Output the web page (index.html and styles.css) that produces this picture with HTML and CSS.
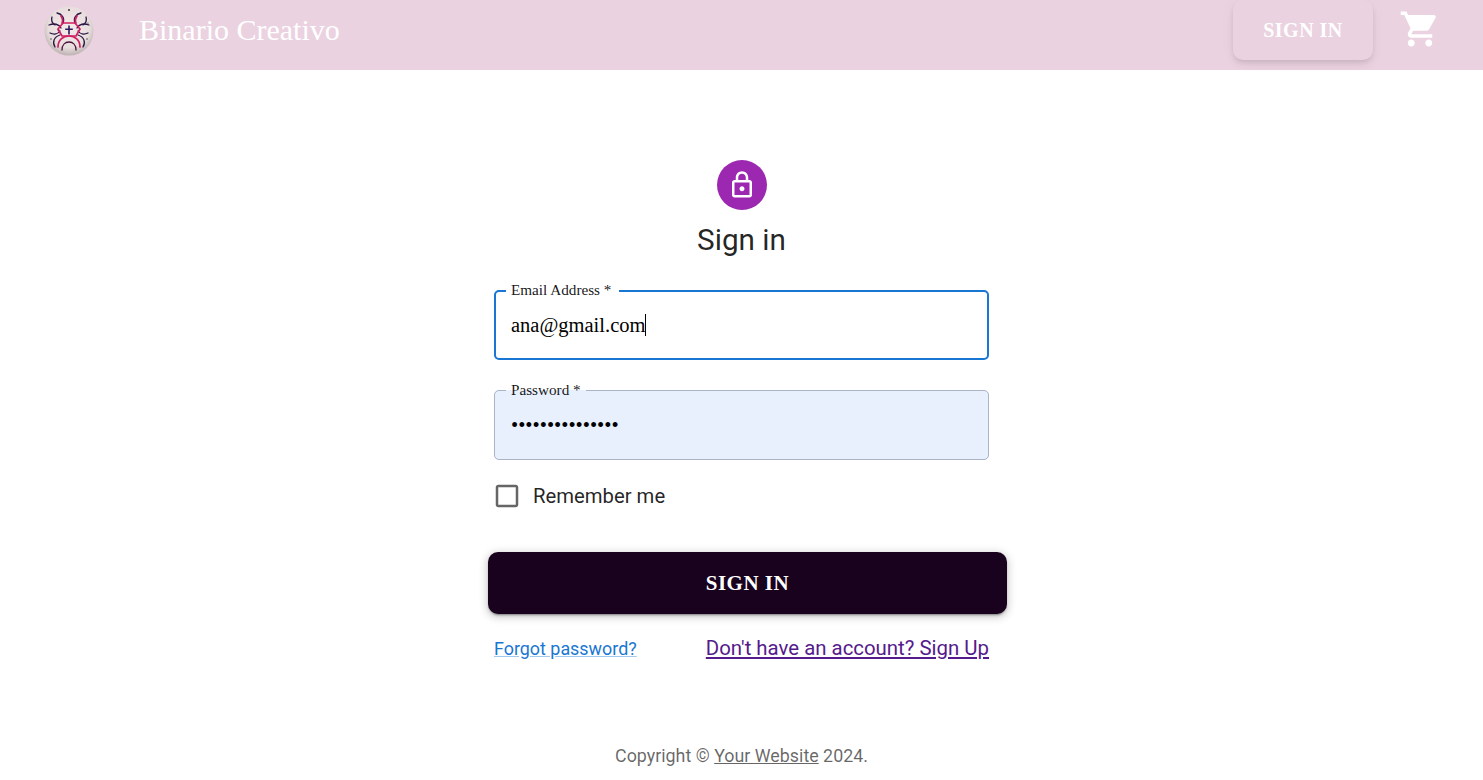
FILE: index.html
```html
<!DOCTYPE html>
<html lang="en">
<head>
<meta charset="utf-8">
<title>Binario Creativo</title>
<link rel="stylesheet" href="styles.css">
</head>
<body>
<header class="topbar">
  <svg class="logo" viewBox="0 0 50 50" aria-hidden="true">
    <defs>
      <radialGradient id="ball" cx="50%" cy="42%" r="60%">
        <stop offset="0" stop-color="#f3eaea"/>
        <stop offset="0.7" stop-color="#e9dede"/>
        <stop offset="1" stop-color="#b8adad"/>
      </radialGradient>
    </defs>
    <circle cx="25" cy="25" r="24.5" fill="url(#ball)"/>
    <g fill="none" stroke-linecap="round">
      <g stroke="#2c1846" stroke-width="1.300">
        <path d="M13 7c5 1 8 5 6 10"/>
        <path d="M37 7c-5 1-8 5-6 10"/>
        <path d="M8 11c-1 3 0 6 3 8"/>
        <path d="M42 11c1 3 0 6-3 8"/>
        <path d="M5 19c5-2 10-1 12 3"/>
        <path d="M45 19c-5-2-10-1-12 3"/>
        <path d="M6 27c4 2 8 1 10-2"/>
        <path d="M44 27c-4 2-8 1-10-2"/>
        <path d="M11 41c-3-5-1-10 5-12"/>
        <path d="M39 41c3-5 1-10-5-12"/>
      </g>
      <g stroke="#d11f63" stroke-width="1.700">
        <path d="M19 17h12l5 6-4 7H18l-4-7z"/>
        <path d="M14 41c0-7 5-11 11-11s11 4 11 11"/>
        <path d="M17 10c2 3 2 5 1 7"/>
        <path d="M33 10c-2 3-2 5-1 7"/>
      </g>
      <path stroke="#4a1238" stroke-width="1.300" d="M18 44c0-5 3-8 7-8s7 3 7 8"/>
    </g>
    <path d="M24.200 19.500h1.600v3h3v1.600h-3v4.400h-1.600v-4.400h-3v-1.600h3z" fill="#2d1a5a"/>
    <circle cx="25" cy="4" r="1" fill="#333"/>
    <circle cx="7" cy="33" r=".7" fill="#333"/>
    <circle cx="43" cy="33" r=".7" fill="#333"/>
    <circle cx="44" cy="17" r=".6" fill="#333"/>
    <circle cx="14" cy="24" r=".6" fill="#333"/>
  </svg>
  <div class="brand">Binario Creativo</div>
  <div class="spacer"></div>
  <button class="nav-signin" type="button">SIGN IN</button>
  <svg class="cart" viewBox="0 0 24 24" aria-hidden="true">
    <path d="M7 18c-1.100 0-1.990.9-1.990 2S5.900 22 7 22s2-.9 2-2-.9-2-2-2zM1 2v2h2l3.600 7.590-1.350 2.450c-.16.280-.25.610-.25.960 0 1.100.9 2 2 2h12v-2H7.420c-.14 0-.25-.11-.25-.25l.03-.12.9-1.630h7.450c.75 0 1.410-.41 1.750-1.030l3.580-6.470c.08-.14.120-.31.120-.48 0-.55-.45-1-1-1H5.210l-.94-2H1zm16 16c-1.100 0-1.990.9-1.990 2s.89 2 1.990 2 2-.9 2-2-.9-2-2-2z"/>
  </svg>
</header>

<main class="page">
  <div class="avatar">
    <svg viewBox="0 0 24 24" aria-hidden="true">
      <path d="M18 8h-1V6c0-2.760-2.240-5-5-5S7 3.240 7 6v2H6c-1.100 0-2 .9-2 2v10c0 1.100.9 2 2 2h12c1.100 0 2-.9 2-2V10c0-1.100-.9-2-2-2zM9 6c0-1.660 1.340-3 3-3s3 1.340 3 3v2H9V6zm9 14H6V10h12v10zm-6-3c1.100 0 2-.9 2-2s-.9-2-2-2-2 .9-2 2 .9 2 2 2z"/>
    </svg>
  </div>
  <h1 class="title">Sign in</h1>

  <form class="form">
    <div class="field field-focus">
      <fieldset class="outline"><legend>Email Address *</legend></fieldset>
      <input class="input" type="text" value="ana@gmail.com" readonly>
      <span class="caret"></span>
    </div>
    <div class="field field-filled">
      <fieldset class="outline"><legend>Password *</legend></fieldset>
      <input class="input" type="password" value="anapassword1234" readonly>
    </div>
    <label class="remember">
      <svg viewBox="0 0 24 24" aria-hidden="true">
        <path d="M19 5v14H5V5h14m0-2H5c-1.100 0-2 .9-2 2v14c0 1.100.9 2 2 2h14c1.100 0 2-.9 2-2V5c0-1.100-.9-2-2-2z"/>
      </svg>
      <span>Remember me</span>
    </label>
    <button class="submit" type="button">SIGN IN</button>
    <div class="links">
      <a class="link-forgot" href="#">Forgot password?</a>
      <a class="link-signup" href="#">Don't have an account? Sign Up</a>
    </div>
  </form>

  <footer class="copyright">Copyright © <a href="#">Your Website</a> 2024.</footer>
</main>
</body>
</html>
```
FILE: styles.css
```css
* { box-sizing: border-box; }
html, body { margin: 0; height: 100%; }
body { background: #fff; font-family: Roboto, sans-serif; overflow: hidden; }

.topbar {
  display: flex;
  align-items: flex-start;
  height: 70px;
  padding-left: 44px;
  background: #ebd2e0;
}
.logo { width: 50px; height: 50px; margin-top: 6px; flex: none; }
.brand {
  margin-left: 45px;
  font-family: "Liberation Serif", serif;
  font-size: 30px;
  line-height: 60px;
  color: #fff;
}
.spacer { flex: 1; }
.nav-signin {
  width: 140px;
  height: 60px;
  border: 0;
  border-radius: 10px;
  background: #ebd2e0;
  box-shadow: 0 3px 5px -1px rgba(0,0,0,.1), 0 6px 10px 0 rgba(0,0,0,.04), 0 1px 18px 0 rgba(0,0,0,.03);
  color: #fff;
  font-family: "Liberation Serif", serif;
  font-weight: 700;
  font-size: 20px;
  letter-spacing: .5px;
}
.cart { width: 42px; height: 42px; margin: 8px 42px 0 26px; fill: #fff; flex: none; }

.page { display: flex; flex-direction: column; align-items: center; padding-top: 90px; }
.avatar {
  width: 50px; height: 50px;
  border-radius: 50%;
  background: #9c27b0;
  display: flex; align-items: center; justify-content: center;
}
.avatar svg { width: 30px; height: 30px; fill: #fff; }
.title {
  margin: 9px 0 0;
  font-size: 29.700px;
  font-weight: 400;
  line-height: 42px;
  color: rgba(0,0,0,.87);
}

.form { width: 495px; margin-top: 29px; display: flex; flex-direction: column; }
.field { position: relative; height: 70px; margin-bottom: 30px; }
.outline {
  position: absolute; inset: -9px 0 0 0;
  margin: 0; padding: 0 8px 0 11px;
  border: 1px solid #aab4c6;
  border-radius: 5px;
  pointer-events: none;
}
.outline legend {
  padding: 0 5px 2px;
  font-family: "Liberation Serif", serif;
  font-size: 15.200px;
  line-height: 17px;
  color: rgba(0,0,0,.92);
}
.field-focus .outline { border: 2px solid #1976d2; padding-left: 10px; }
.field-focus .outline legend { padding-right: 8px; }
.field-filled { background: #e8f0fe; border-radius: 5px; }
.input {
  display: block;
  width: 100%; height: 100%;
  padding: 0 17px;
  border: 0; outline: 0;
  background: transparent;
  font-family: "Liberation Serif", serif;
  font-size: 20.500px;
  color: #000;
}
.caret { position: absolute; left: 151px; top: 24px; width: 1px; height: 22px; background: #000; }

.remember {
  display: flex; align-items: center;
  height: 36px; margin-top: -12px;
  font-size: 20.300px;
  color: rgba(0,0,0,.87);
}
.remember svg { width: 30px; height: 30px; fill: #666; margin-right: 11px; margin-left: -2px; flex: none; }

.submit {
  width: 519px; height: 62px;
  margin: 38px 0 0 -6px;
  border: 0; border-radius: 10px;
  background: #19021d;
  color: #fff;
  font-family: "Liberation Serif", serif;
  font-weight: 700;
  font-size: 21px;
  letter-spacing: .5px;
  box-shadow: 0 3px 1px -2px rgba(0,0,0,.2), 0 2px 2px 0 rgba(0,0,0,.14), 0 2px 8px 1px rgba(0,0,0,.22);
}

.links { display: flex; justify-content: space-between; align-items: baseline; margin-top: 22px; }
.link-forgot { font-size: 17.900px; color: #1976d2; text-decoration-color: rgba(25,118,210,.4); }
.link-signup { font-size: 20.400px; color: #551a8b; }

.copyright { margin-top: 85px; font-size: 17.850px; color: rgba(0,0,0,.6); }
.copyright a { color: inherit; }
```
